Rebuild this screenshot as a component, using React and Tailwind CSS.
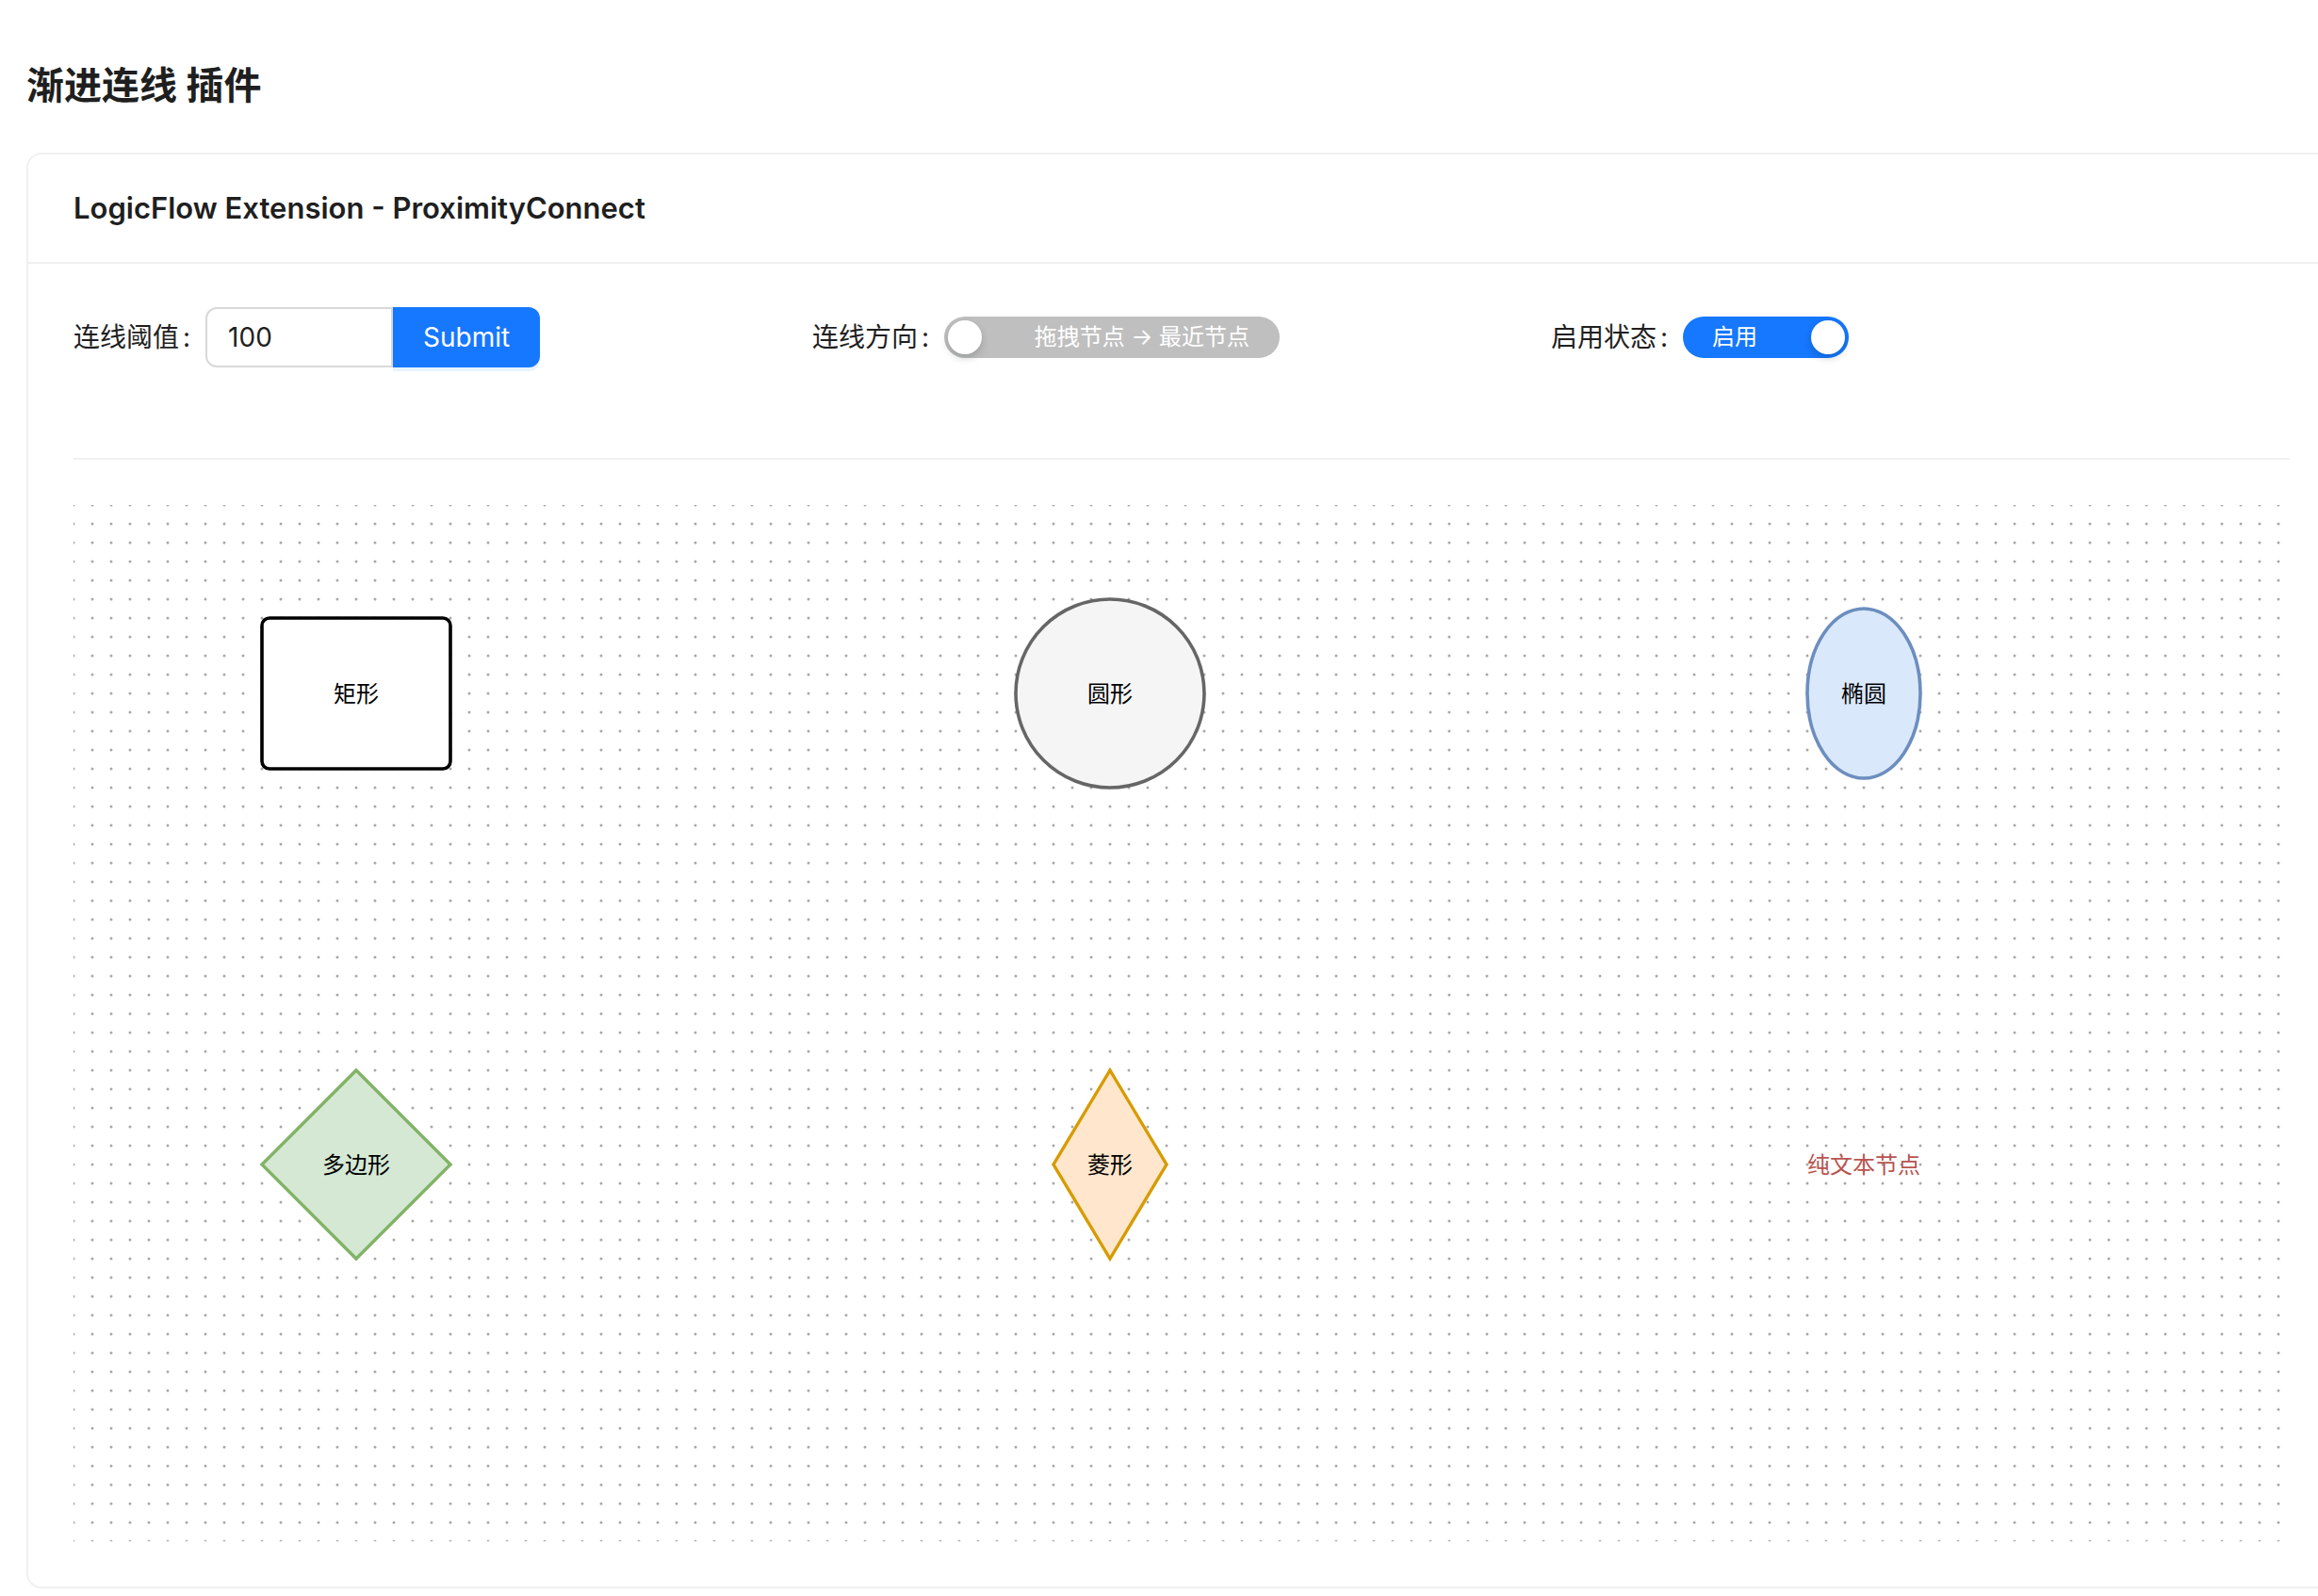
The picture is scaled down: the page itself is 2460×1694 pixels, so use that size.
import React from 'react';

function Label({ children }) {
  return (
    <span className="text-[28px] leading-[44px] text-[#1f1f1f] whitespace-nowrap">
      {children}
      <span className="ml-[4px] mr-[16px]">:</span>
    </span>
  );
}

function Switch({ checked, text, className }) {
  return (
    <div
      className={`relative h-[44px] rounded-full flex items-center text-[24px] leading-none text-white whitespace-nowrap ${
        checked ? 'bg-[#1677ff] justify-start pl-[31px]' : 'bg-[#bfbfbf] justify-end pr-[32px]'
      } ${className}`}
    >
      {text}
      <span
        className={`absolute top-[4px] w-[36px] h-[36px] rounded-full bg-white shadow-[0_4px_8px_rgba(0,35,11,0.2)] ${
          checked ? 'right-[4px]' : 'left-[4px]'
        }`}
      />
    </div>
  );
}

function FlowCanvas() {
  return (
    <svg className="block w-full h-full">
      <defs>
        <pattern id="grid" x="-10" y="-10" width="20" height="20" patternUnits="userSpaceOnUse">
          <circle cx="10" cy="10" r="1.5" fill="#a8a8a8" />
        </pattern>
      </defs>
      <rect width="100%" height="100%" fill="url(#grid)" />

      {/* top row */}
      <rect x="200" y="120" width="200" height="160" rx="8" fill="#fff" stroke="#000" strokeWidth="3.6" />
      <text x="300" y="200" textAnchor="middle" dominantBaseline="central" fontSize="24" fill="#000">矩形</text>

      <circle cx="1100" cy="200" r="100" fill="#f5f5f5" stroke="#666" strokeWidth="3.6" />
      <text x="1100" y="200" textAnchor="middle" dominantBaseline="central" fontSize="24" fill="#000">圆形</text>

      <ellipse cx="1900" cy="200" rx="60" ry="90" fill="#dae8fc" stroke="#6c8ebf" strokeWidth="3.6" />
      <text x="1900" y="200" textAnchor="middle" dominantBaseline="central" fontSize="24" fill="#000">椭圆</text>

      {/* bottom row */}
      <polygon points="300,600 400,700 300,800 200,700" fill="#d5e8d4" stroke="#82b366" strokeWidth="3.4" />
      <text x="300" y="700" textAnchor="middle" dominantBaseline="central" fontSize="24" fill="#000">多边形</text>

      <polygon points="1100,600 1160,700 1100,800 1040,700" fill="#ffe6cc" stroke="#d79b00" strokeWidth="3.4" />
      <text x="1100" y="700" textAnchor="middle" dominantBaseline="central" fontSize="24" fill="#000">菱形</text>

      <text x="1900" y="700" textAnchor="middle" dominantBaseline="central" fontSize="24" fill="#b85450">纯文本节点</text>
    </svg>
  );
}

export default function App() {
  return (
    <div className="min-h-screen bg-white overflow-hidden font-['Inter','Noto_Sans_CJK_SC',sans-serif] pb-[10px]">
      <h2 className="pl-[28px] pt-[63px] text-[40px] leading-[56px] font-bold text-[#1f1f1f]">
        渐进连线 插件
      </h2>

      <div className="mt-[43px] ml-[28px] w-[2452px] border-2 border-[#f0f0f0] rounded-[16px]">
        <div className="h-[116px] px-[48px] flex items-center border-b-2 border-[#f0f0f0] text-[31px] font-semibold text-[#1f1f1f]">
          LogicFlow Extension - ProximityConnect
        </div>

        <div className="px-[48px] pt-[46px] pb-[48px]">
          <div className="grid grid-cols-3 h-[64px]">
            <div className="flex items-center">
              <Label>连线阈值</Label>
              <div className="flex">
                <input
                  defaultValue="100"
                  className="w-[199px] h-[64px] border-2 border-[#d9d9d9] rounded-l-[12px] px-[22px] text-[28px] text-[#1f1f1f] outline-none"
                />
                <button className="w-[156px] h-[64px] bg-[#1677ff] text-white text-[28px] rounded-r-[12px] shadow-[0_4px_0_rgba(5,145,255,0.1)]">
                  Submit
                </button>
              </div>
            </div>
            <div className="flex items-center">
              <Label>连线方向</Label>
              <Switch checked={false} text="拖拽节点 → 最近节点" className="w-[356px]" />
            </div>
            <div className="flex items-center">
              <Label>启用状态</Label>
              <Switch checked text="启用" className="w-[176px]" />
            </div>
          </div>

          <div className="mt-[96px] mb-[48px] h-[2px] bg-[#f0f0f0]" />

          <div className="h-[1100px]">
            <FlowCanvas />
          </div>
        </div>
      </div>
    </div>
  );
}
